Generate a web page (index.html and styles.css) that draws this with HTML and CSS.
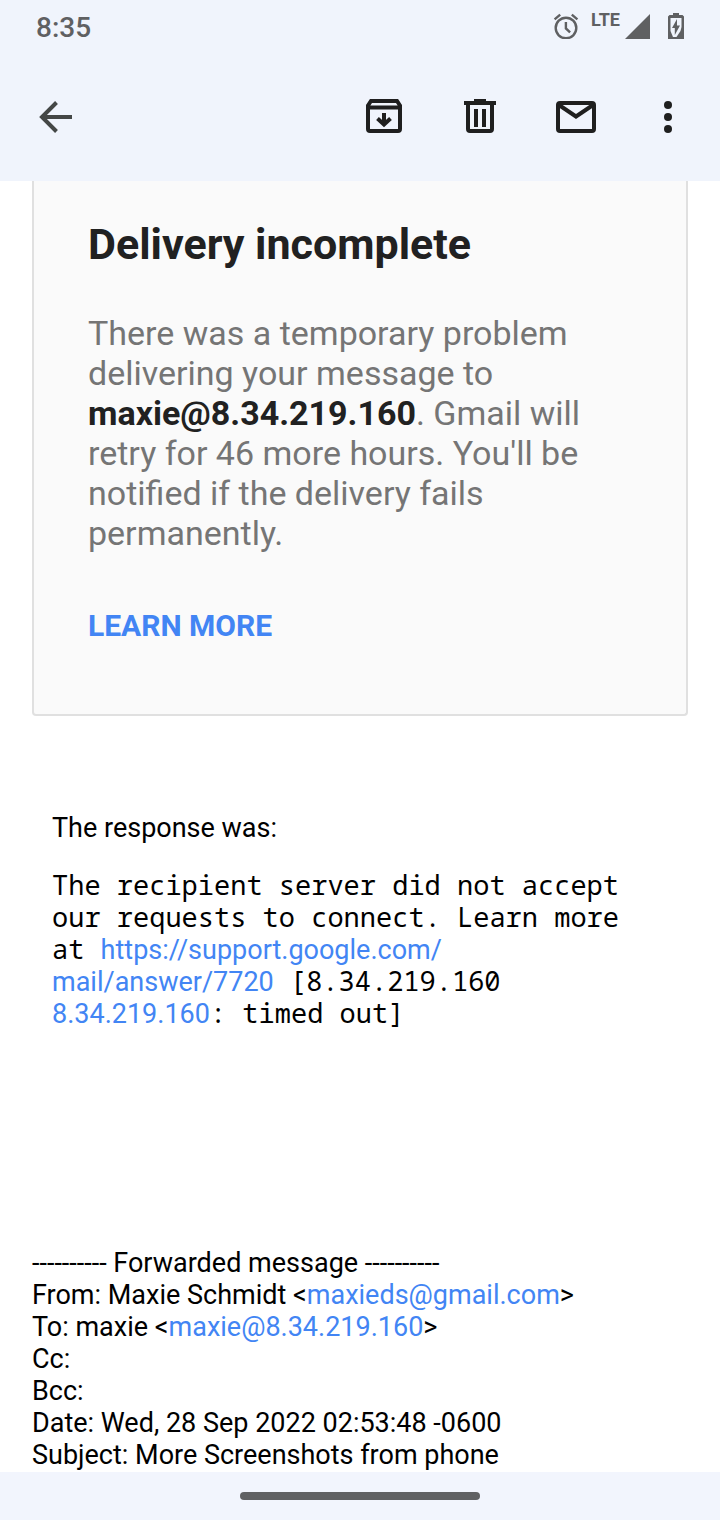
FILE: index.html
```html
<!DOCTYPE html>
<html lang="en">
<head>
<meta charset="utf-8">
<meta name="viewport" content="width=device-width, initial-scale=1">
<title>Delivery incomplete</title>
<link rel="stylesheet" href="styles.css">
</head>
<body>
<header class="header">
  <div class="status">
    <span class="clock">8:35</span>
    <div class="indicators">
      <svg class="alarm" width="26" height="26" viewBox="0 0 26 26" fill="none" stroke="currentColor" stroke-width="2.4"><circle cx="13" cy="15" r="10.3"/><path d="M12.9 9v6.4l4.2 4M1.6 6.4l5.6-4.7M24.4 6.4l-5.6-4.7"/></svg>
      <span class="lte">LTE</span>
      <svg class="signal" width="25" height="26" viewBox="0 0 25 26" fill="currentColor"><path d="M25 1v25H0z"/></svg>
      <svg class="battery" width="16" height="26" viewBox="0 0 16 26"><path fill="currentColor" d="M5 0h6v2h3.5L16 3.5V26H0V3.500L1.500 2H5z"/><path fill="#f0f4fc" d="M2.500 5h11v9l-1 4-4 6H5l-2.500-6z"/><path fill="currentColor" d="M9 6v6.500h3L6.800 22v-7H4z"/></svg>
    </div>
  </div>
  <nav class="toolbar" aria-label="Message actions">
    <button class="tool back" type="button" aria-label="Back"><svg width="48" height="48" viewBox="0 0 48 48" fill="none" stroke="currentColor" stroke-width="4"><path d="M40 24H11M24.500 9.500 10 24l14.500 14.500"/></svg></button>
    <button class="tool" type="button" aria-label="Archive"><svg width="48" height="48" viewBox="0 0 48 48" fill="none" stroke="currentColor" stroke-width="4"><path d="M8 12.500V36q0 2 2 2h28q2 0 2-2V12.500L37 8H11zM8 14.500h32"/><path d="M24 20v12M17.500 25.500l6.500 6 6.500-6"/></svg></button>
    <button class="tool" type="button" aria-label="Delete"><svg width="48" height="48" viewBox="0 0 48 48" fill="none" stroke="currentColor" stroke-width="4"><path d="M8 10h32M18 8h12M12 10v26q0 2 2 2h20q2 0 2-2V10M20 16v18M28 16v18"/></svg></button>
    <button class="tool" type="button" aria-label="Mark as unread"><svg width="48" height="48" viewBox="0 0 48 48" fill="none" stroke="currentColor" stroke-width="4"><rect x="6" y="10" width="36" height="28" rx="2"/><path d="M7 12l17 11.500L41 12"/></svg></button>
    <button class="tool more" type="button" aria-label="More options"><svg width="24" height="48" viewBox="0 0 24 48" fill="currentColor"><circle cx="12" cy="12" r="4"/><circle cx="12" cy="24" r="4"/><circle cx="12" cy="36" r="4"/></svg></button>
  </nav>
</header>
<main class="message">
  <section class="card">
    <h1 class="title">Delivery incomplete</h1>
    <p class="notice">There was a temporary problem delivering your message to <strong class="recipient">maxie@8.34.219.160</strong>. Gmail will retry for 46 more hours. You'll be notified if the delivery fails permanently.</p>
    <a class="learn" href="#">LEARN MORE</a>
  </section>
  <section class="response">
    <p class="label">The response was:</p>
    <p class="reply">The recipient server did not accept our requests to connect. Learn more at <a class="link" href="#">https://support.google.com/<wbr>mail/answer/7720</a> [8.34.219.160 <a class="link" href="#">8.34.219.160</a>: timed out]</p>
  </section>
  <section class="forwarded">
    <p>---------- Forwarded message ----------</p>
    <p>From: Maxie Schmidt &lt;<a class="link" href="#">maxieds@gmail.com</a>&gt;</p>
    <p>To: maxie &lt;<a class="link" href="#">maxie@8.34.219.160</a>&gt;</p>
    <p>Cc:</p>
    <p>Bcc:</p>
    <p>Date: Wed, 28 Sep 2022 02:53:48 -0600</p>
    <p>Subject: More Screenshots from phone</p>
  </section>
</main>
<footer class="gesture"><span class="handle"></span></footer>
</body>
</html>
```
FILE: styles.css
```css
* { box-sizing: border-box; }
body {
  margin: 0;
  min-height: 100vh;
  display: flex;
  flex-direction: column;
  background: #fff;
  color: #000;
  font: 27px/32px Roboto, sans-serif;
}
h1, p { margin: 0; }
a { color: #4285f4; text-decoration: none; }
svg { display: block; }
.header { background: #f0f4fc; padding-bottom: 16px; }
.status {
  display: flex;
  justify-content: space-between;
  align-items: center;
  height: 56px;
  padding: 0 36px;
  color: #5f6062;
}
.clock { font-size: 28px; font-weight: 500; }
.indicators { display: flex; align-items: flex-start; height: 30px; }
.lte { margin-left: 12px; font-size: 18px; line-height: 14px; font-weight: 700; }
.signal { margin-left: 5px; }
.battery { margin-left: 18px; }
.toolbar {
  display: flex;
  align-items: center;
  gap: 48px;
  height: 96px;
  margin-top: 13px;
  padding: 0 40px 0 32px;
}
.tool { border: 0; padding: 0; background: none; color: #1f1f1f; }
.back { margin-right: auto; color: #444746; }
.more { margin-left: 8px; }
.message { flex: 1; padding: 0 32px; }
.card {
  padding: 39px 54px 68px;
  border: 2px solid #e0e0e0;
  border-top: 0;
  border-radius: 0 0 4px 4px;
  background: #fafafa;
}
.title { font-size: 43px; line-height: 48px; font-weight: 700; color: #212121; }
.notice { margin: 45px 0 53px; font-size: 34px; line-height: 40px; color: #757575; }
.recipient { color: #212121; }
.learn { display: block; font-size: 30px; line-height: 40px; font-weight: 700; }
.response { padding: 96px 32px 0 20px; }
.reply {
  margin-top: 25px;
  font-family: "Noto Sans Mono", "DejaVu Sans Mono", monospace;
}
.link { font-family: Roboto, sans-serif; line-height: 1; }
.forwarded { padding-top: 218px; }
.gesture {
  display: flex;
  justify-content: center;
  align-items: center;
  height: 48px;
  background: #f2f5fd;
}
.handle { width: 240px; height: 8px; border-radius: 4px; background: #606163; }
```
